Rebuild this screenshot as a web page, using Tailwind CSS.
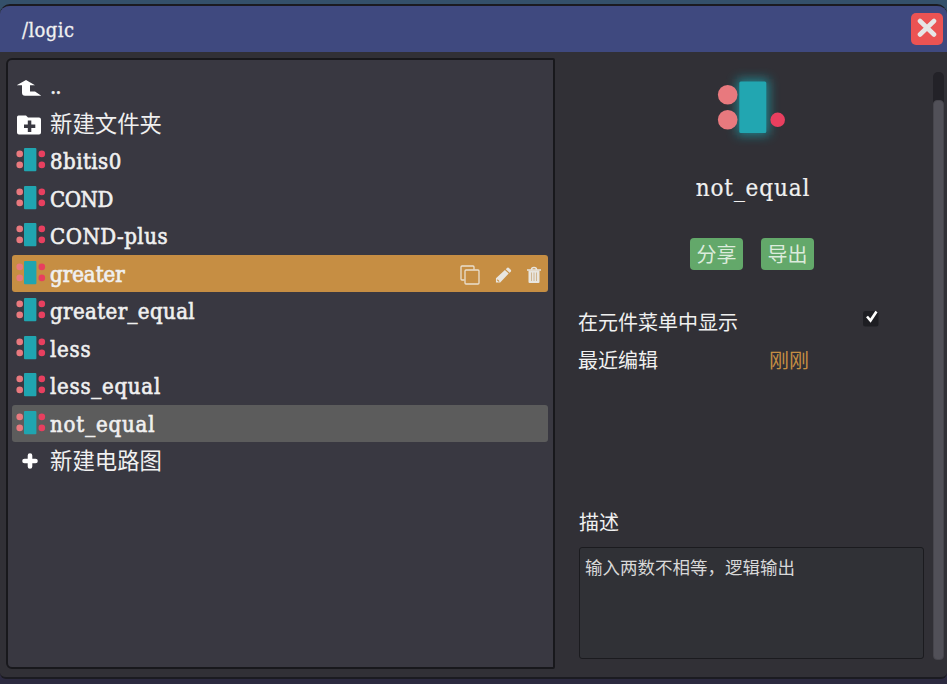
<!DOCTYPE html>
<html lang="zh-CN">
<head>
<meta charset="utf-8">
<title>/logic</title>
<script src="https://cdn.jsdelivr.net/npm/@tailwindcss/browser@4"></script>
</head>
<body class="w-[947px] h-[684px] overflow-hidden bg-[#2c2a40] font-['DejaVu_Serif_Condensed','DejaVu_Serif','Noto_Sans_CJK_SC',serif] text-[#f0f0f0]">
<svg class="hidden">
  <symbol id="chip" viewBox="0 0 30 37.5">
    <circle cx="3.7" cy="11.9" r="3.3" fill="#e8797e"/><circle cx="3.7" cy="22.9" r="3.3" fill="#e8797e"/>
    <circle cx="25.8" cy="11.9" r="3.3" fill="#e83f5f"/><circle cx="25.8" cy="22.9" r="3.3" fill="#e83f5f"/>
    <rect x="8" y="6" width="12.4" height="23.3" rx="1" fill="#20a5b0"/>
  </symbol>
</svg>
<div class="h-full flex flex-col bg-linear-to-b from-[#34506a] from-[1%] to-[#2c2a40] to-[4%] pt-[4px]">
  <main class="h-[675px] flex flex-col rounded-t-[10px] rounded-b-[6px] border-y-2 border-[#1b1b21] bg-[#313036] overflow-hidden">
    <header class="h-[46px] shrink-0 flex items-center justify-between bg-[#3f497f] pl-[22px] pr-[4px]">
      <h1 class="text-[20px] leading-[46px] pt-px h-[46px] tracking-[0.4px] [-webkit-text-stroke:0.3px]">/logic</h1>
      <button class="size-[32px] rounded-[5px] bg-[#eb5353] flex items-center justify-center" aria-label="关闭">
        <svg class="size-[22px]" viewBox="0 0 22 22" stroke="#e6e6e6" stroke-width="4.6" stroke-linecap="round"><path d="M4 3 18 16.5M18 3 4 16.5"/></svg>
      </button>
    </header>
    <div class="flex flex-1 pt-[6px] pl-[6px]">
      <section class="w-[549px] h-[611px] rounded-l-[6px] rounded-r-[2px] border-2 border-[#18181c] bg-[#393841] pt-[7px] pl-[4px] pr-[5px] text-[22px]">
        <ul>
          <li class="h-[37.5px] flex items-center pl-[4px]">
            <svg class="w-[34px] h-[37.5px] shrink-0" viewBox="0 0 34 37.5"><path d="M10 13 19 18.300H14V24.500H19L25.300 28.700H9Q6 28.700 6 25.500V18.300H.7Z" fill="#fff"/></svg>
            <span class="leading-[37px] pt-[2px] tracking-[-1px] [-webkit-text-stroke:0.4px]">..</span>
          </li>
          <li class="h-[37.5px] flex items-center pl-[4px]">
            <svg class="w-[34px] h-[37.5px] shrink-0" viewBox="0 0 34 37.5"><path fill="#fff" fill-rule="evenodd" d="M2.500 10.500H10l2 2h11a2 2 0 0 1 2 2V27.500a2 2 0 0 1-2 2H3a2 2 0 0 1-2-2V12a1.500 1.500 0 0 1 1.500-1.500ZM11.800 15.500v4H8v3.500h3.800v4h3.500v-4h4v-3.500h-4v-4Z"/></svg>
            <span class="font-['Noto_Sans_CJK_SC',sans-serif] text-[22.400px] leading-[37px] pb-[2px]">新建文件夹</span>
          </li>
          <li class="h-[37.5px] flex items-center pl-[4px]"><svg class="w-[30px] h-[37.5px] mr-[4px] shrink-0"><use href="#chip"/></svg><span class="leading-[37px] pt-[2px] tracking-[0.45px] [-webkit-text-stroke:0.6px]">8bitis0</span></li>
          <li class="h-[37.5px] flex items-center pl-[4px]"><svg class="w-[30px] h-[37.5px] mr-[4px] shrink-0"><use href="#chip"/></svg><span class="leading-[37px] pt-[2px] tracking-[-0.4px] [-webkit-text-stroke:0.6px]">COND</span></li>
          <li class="h-[37.5px] flex items-center pl-[4px]"><svg class="w-[30px] h-[37.5px] mr-[4px] shrink-0"><use href="#chip"/></svg><span class="leading-[37px] pt-[2px] tracking-[0.5px] [-webkit-text-stroke:0.6px]">COND-plus</span></li>
          <li class="h-[37.5px] flex items-center pl-[4px] rounded-[3px] bg-[#c68e43]"><svg class="w-[30px] h-[37.5px] mr-[4px] shrink-0"><use href="#chip"/></svg><span class="leading-[37px] pt-[2px] [-webkit-text-stroke:0.7px]">greater</span>
            <span class="ml-auto mr-[7px] flex gap-[15px] items-center pt-[4px]">
              <svg class="w-[20px] h-[20px]" viewBox="0 0 20 20" fill="none" stroke="#eadfce" stroke-width="1.300"><path d="M4.500 15H2Q1 15 1 14V2Q1 1 2 1H13Q14 1 14 2V4.500"/><rect x="5" y="5" width="14" height="14" rx="1"/></svg>
              <svg class="w-[17px] h-[17px] mt-px" viewBox="0 0 18 18" fill="#e8e5df"><path fill-rule="evenodd" d="M1 12 10.500 3.200 14.500 7 5.500 16.500H1ZM2.700 12.900 4.800 15 3.800 15.600 2.100 13.900Z"/><path d="M11.400 2.300 13 .9Q14 .3 15 1.200L16.700 2.900Q17.500 4 16.700 4.900L15.400 6.200Z"/></svg>
              <svg class="w-[14px] h-[18px]" viewBox="0 0 14 18"><path d="M1.500 4.500H12.500V16a1 1 0 0 1-1 1H2.500a1 1 0 0 1-1-1Z" fill="#e8e5df"/><path d="M0 4H14M4.500 3.500Q4.500 1.500 7 1.500T9.500 3.500" fill="none" stroke="#e8e5df" stroke-width="1.500"/><path d="M4.500 6.500V15M7 6.500V15M9.500 6.500V15" stroke="#c9aa7e" stroke-width=".8"/></svg>
            </span>
          </li>
          <li class="h-[37.5px] flex items-center pl-[4px]"><svg class="w-[30px] h-[37.5px] mr-[4px] shrink-0"><use href="#chip"/></svg><span class="leading-[37px] pt-[2px] tracking-[0.4px] [-webkit-text-stroke:0.6px]">greater_equal</span></li>
          <li class="h-[37.5px] flex items-center pl-[4px]"><svg class="w-[30px] h-[37.5px] mr-[4px] shrink-0"><use href="#chip"/></svg><span class="leading-[37px] pt-[2px] tracking-[0.75px] [-webkit-text-stroke:0.6px]">less</span></li>
          <li class="h-[37.5px] flex items-center pl-[4px]"><svg class="w-[30px] h-[37.5px] mr-[4px] shrink-0"><use href="#chip"/></svg><span class="leading-[37px] pt-[2px] tracking-[0.75px] [-webkit-text-stroke:0.6px]">less_equal</span></li>
          <li class="h-[37.5px] flex items-center pl-[4px] rounded-[3px] bg-[#5c5c5c]"><svg class="w-[30px] h-[37.5px] mr-[4px] shrink-0"><use href="#chip"/></svg><span class="leading-[37px] pt-[2px] tracking-[0.85px] [-webkit-text-stroke:0.6px]">not_equal</span></li>
          <li class="h-[37.5px] flex items-center pl-[4px]">
            <svg class="w-[34px] h-[37.5px] shrink-0" viewBox="0 0 34 37.5"><path d="M14 13.500V24.500M8.500 19H19.500" stroke="#fff" stroke-width="4.600" stroke-linecap="round"/></svg>
            <span class="font-['Noto_Sans_CJK_SC',sans-serif] text-[22.400px] leading-[37px] pb-[2px]">新建电路图</span>
          </li>
        </ul>
      </section>
      <aside class="flex-1 pl-[23px] pt-[14px] flex">
        <div class="w-[347px] font-['Noto_Sans_CJK_SC',sans-serif] text-[20px]">
          <svg class="block w-[347px] h-[80px] overflow-visible" viewBox="578 72 347 80">
            <defs><filter id="glow" x="-80%" y="-50%" width="260%" height="200%"><feGaussianBlur stdDeviation="5.500"/></filter></defs>
            <rect x="737" y="79" width="32" height="56" fill="#1b98a3" opacity=".8" filter="url(#glow)"/>
            <circle cx="727.700" cy="94.800" r="9.800" fill="#e8797e"/><circle cx="727.700" cy="119.800" r="9.800" fill="#e8797e"/>
            <rect x="739.300" y="81.500" width="27" height="51.500" rx="1.500" fill="#22a6b1"/><circle cx="777.700" cy="119.800" r="7.300" fill="#e83f5f"/>
          </svg>
          <h2 class="h-[86px] pt-[17px] text-center text-[24px] leading-[38px] tracking-[0.9px] [-webkit-text-stroke:0.2px] font-['DejaVu_Serif_Condensed','DejaVu_Serif',serif] pl-[3px]">not_equal</h2>
          <div class="flex gap-[18px] pl-[112px] text-[#dcebdc]">
            <button class="w-[53px] h-[32px] rounded-[4px] bg-[#63a86a] leading-[32px]">分享</button>
            <button class="w-[53px] h-[32px] rounded-[4px] bg-[#63a86a] leading-[32px]">导出</button>
          </div>
          <div class="mt-[33px] h-[37px] flex leading-[37px]">
            <span class="w-[285px]">在元件菜单中显示</span>
            <svg class="w-[16px] h-[20px] mt-[4px] overflow-visible" viewBox="0 0 16 20"><rect x="0" y="4" width="15.500" height="15.500" rx="2.500" fill="#1e1e23"/><path d="M4 9.500 7.500 13.500 13.500 4.500" fill="none" stroke="#fff" stroke-width="2.600"/></svg>
          </div>
          <div class="h-[37px] flex leading-[39px]"><span class="w-[191px]">最近编辑</span><span class="text-[#c68e43]">刚刚</span></div>
          <h3 class="mt-[126px] pl-px h-[37px] leading-[37px]">描述</h3>
          <div class="mt-[7px] ml-px w-[345px] h-[112px] rounded-[3px] border border-[#1b1b1f] bg-[#303136] px-[5px] pt-[4px] text-[17.500px] leading-[30px] text-[#d8d8d8]">输入两数不相等，逻辑输出</div>
        </div>
        <div class="ml-[8px] w-[11px] h-[588px] rounded-[5px] bg-[#232228] flex flex-col justify-end"><div class="h-[560px] rounded-[4px] bg-[#515058] border border-[#46454c]"></div></div>
      </aside>
    </div>
  </main>
</div>
</body>
</html>
